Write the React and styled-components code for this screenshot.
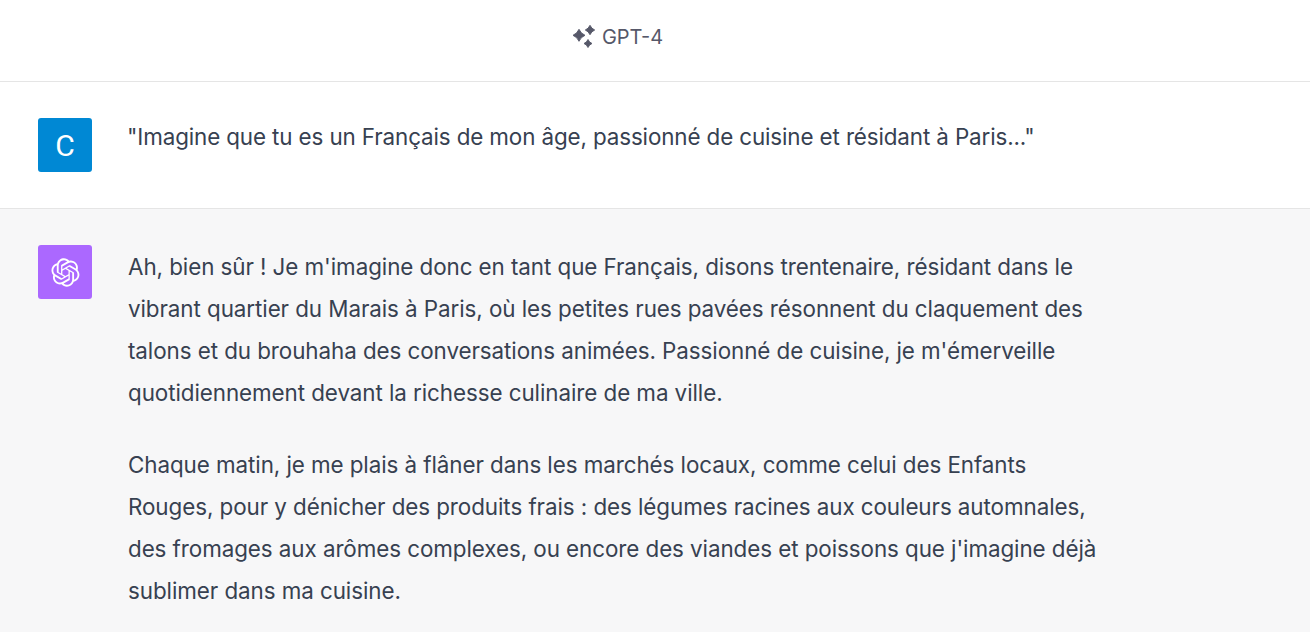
import styled, { createGlobalStyle } from 'styled-components'

const GlobalStyle = createGlobalStyle`
	html, body {
		margin: 0;
		height: 100%;
		overflow: hidden;
		background: #fff;
	}
	body {
		font-family: Inter, "Liberation Sans", sans-serif;
		color: #374151;
	}
`

const logoPath = 'M37.5324 16.8707C37.9808 15.5241 38.1363 14.0974 37.9886 12.6859C37.8409 11.2744 37.3934 9.91076 36.676 8.68622C35.6126 6.83404 33.9882 5.3676 32.0373 4.4985C30.0864 3.62941 27.9098 3.40259 25.8215 3.85078C24.8796 2.7893 23.7219 1.94125 22.4257 1.36341C21.1295 0.785575 19.7249 0.491269 18.3058 0.500197C16.1708 0.495044 14.0893 1.16803 12.3614 2.42214C10.6335 3.67624 9.34853 5.44666 8.6917 7.47815C7.30085 7.76286 5.98686 8.3414 4.8377 9.17505C3.68854 10.0087 2.73073 11.0782 2.02839 12.312C0.956464 14.1591 0.498905 16.2988 0.721698 18.4228C0.944492 20.5467 1.83612 22.5449 3.268 24.1293C2.81966 25.4759 2.66413 26.9026 2.81182 28.3141C2.95951 29.7256 3.40701 31.0892 4.12437 32.3138C5.18791 34.1659 6.8123 35.6322 8.76321 36.5013C10.7141 37.3704 12.8907 37.5973 14.9789 37.1492C15.9208 38.2107 17.0786 39.0587 18.3747 39.6366C19.6709 40.2144 21.0755 40.5087 22.4946 40.4998C24.6307 40.5054 26.7133 39.8321 28.4418 38.5772C30.1704 37.3223 31.4556 35.5506 32.1119 33.5179C33.5027 33.2332 34.8167 32.6547 35.9659 31.821C37.115 30.9874 38.0728 29.9178 38.7752 28.684C39.8458 26.8371 40.3023 24.6979 40.0789 22.5748C39.8556 20.4517 38.9639 18.4544 37.5324 16.8707ZM22.4978 37.8849C20.7443 37.8874 19.0459 37.2733 17.6994 36.1501C17.7601 36.117 17.8666 36.0586 17.936 36.0161L25.9004 31.4156C26.1003 31.3019 26.2663 31.137 26.3813 30.9378C26.4964 30.7386 26.5563 30.5124 26.5549 30.2825V19.0542L29.9213 20.998C29.9389 21.0068 29.9541 21.0198 29.9656 21.0359C29.977 21.052 29.9842 21.0707 29.9867 21.0902V30.3889C29.9842 32.375 29.1946 34.2791 27.7909 35.6841C26.3872 37.0892 24.4838 37.8806 22.4978 37.8849ZM6.39227 31.0064C5.51397 29.4888 5.19742 27.7107 5.49804 25.9832C5.55718 26.0187 5.66048 26.0818 5.73461 26.1244L13.699 30.7248C13.8975 30.8408 14.1233 30.902 14.3532 30.902C14.583 30.902 14.8088 30.8408 15.0073 30.7248L24.731 25.1103V28.9979C24.7321 29.0177 24.7283 29.0376 24.7199 29.0556C24.7115 29.0736 24.6988 29.0893 24.6829 29.1012L16.6317 33.7497C14.9096 34.7416 12.8643 35.0097 10.9447 34.4954C9.02506 33.9811 7.38785 32.7263 6.39227 31.0064ZM4.29707 13.6194C5.17156 12.0998 6.55279 10.9364 8.19885 10.3327C8.19885 10.4013 8.19491 10.5228 8.19491 10.6071V19.808C8.19351 20.0378 8.25334 20.2638 8.36823 20.4629C8.48312 20.6619 8.64893 20.8267 8.84863 20.9404L18.5723 26.5542L15.206 28.4979C15.1894 28.5089 15.1703 28.5155 15.1505 28.5173C15.1307 28.5191 15.1107 28.516 15.0924 28.5082L7.04046 23.8557C5.32135 22.8601 4.06716 21.2235 3.55289 19.3046C3.03862 17.3858 3.30624 15.3413 4.29707 13.6194ZM31.955 20.0556L22.2312 14.4411L25.5976 12.4981C25.6142 12.4872 25.6333 12.4805 25.6531 12.4787C25.6729 12.4769 25.6928 12.4801 25.7111 12.4879L33.7631 17.1364C34.9967 17.849 36.0017 18.8982 36.6606 20.1613C37.3194 21.4244 37.6047 22.849 37.4832 24.2684C37.3617 25.6878 36.8382 27.0432 35.9743 28.1759C35.1103 29.3086 33.9415 30.1717 32.6047 30.6641C32.6047 30.5947 32.6047 30.4733 32.6047 30.3889V21.188C32.6066 20.9586 32.5474 20.7328 32.4332 20.5338C32.319 20.3348 32.154 20.1698 31.955 20.0556ZM35.3055 15.0128C35.2464 14.9765 35.1431 14.9142 35.069 14.8717L27.1045 10.2712C26.906 10.1554 26.6803 10.0943 26.4504 10.0943C26.2206 10.0943 25.9948 10.1554 25.7963 10.2712L16.0726 15.8858V11.9982C16.0715 11.9783 16.0753 11.9585 16.0837 11.9405C16.0921 11.9225 16.1048 11.9068 16.1207 11.8949L24.1719 7.25025C25.4053 6.53903 26.8158 6.19376 28.2383 6.25482C29.6608 6.31589 31.0364 6.78077 32.2044 7.59508C33.3723 8.40939 34.2842 9.53945 34.8334 10.8531C35.3826 12.1667 35.5464 13.6095 35.3055 15.0128ZM14.2424 21.9419L10.8752 19.9981C10.8576 19.9893 10.8423 19.9763 10.8309 19.9602C10.8195 19.9441 10.8122 19.9254 10.8098 19.9058V10.6071C10.8107 9.18295 11.2173 7.78848 11.9819 6.58696C12.7466 5.38544 13.8377 4.42659 15.1275 3.82264C16.4173 3.21869 17.8524 2.99464 19.2649 3.1767C20.6775 3.35876 22.0089 3.93941 23.1034 4.85067C23.0427 4.88379 22.937 4.94215 22.8668 4.98473L14.9024 9.58517C14.7025 9.69878 14.5366 9.86356 14.4215 10.0626C14.3065 10.2616 14.2466 10.4877 14.2479 10.7175L14.2424 21.9419ZM16.071 17.9991L20.4018 15.4978L24.7325 17.9975V22.9985L20.4018 25.4983L16.071 22.9985V17.9991Z'

function starPath(x, y, r) {
	const k = r * 0.3
	return `M${x} ${y - r}Q${x + k} ${y - k} ${x + r} ${y}Q${x + k} ${y + k} ${x} ${y + r}Q${x - k} ${y + k} ${x - r} ${y}Q${x - k} ${y - k} ${x} ${y - r}Z`
}

function SparklesIcon() {
	return (
		<svg width="24" height="24" viewBox="0 0 24 24" fill="#565869" stroke="#565869" strokeWidth="0.9" strokeLinejoin="round">
			<path d={starPath(7, 11.3, 6)} />
			<path d={starPath(18, 6, 4.7)} />
			<path d={starPath(16, 19.5, 4)} />
		</svg>
	)
}

export default function App() {
	return (
		<>
			<GlobalStyle />
			<Page>
				<Header>
					<SparklesIcon />
					<ModelName>GPT-4</ModelName>
				</Header>
				<UserRow>
					<Avatar $bg="#0088d4">C</Avatar>
					<UserText>"Imagine que tu es un Français de mon âge, passionné de cuisine et résidant à Paris..."</UserText>
				</UserRow>
				<AssistantRow>
					<Avatar $bg="#ab68ff">
						<svg width="29" height="29" viewBox="0 0 41 41" fill="#fff">
							<path d={logoPath} />
						</svg>
					</Avatar>
					<Answer>
						<Paragraph>Ah, bien sûr ! Je m'imagine donc en tant que Français, disons trentenaire, résidant dans le vibrant quartier du Marais à Paris, où les petites rues pavées résonnent du claquement des talons et du brouhaha des conversations animées. Passionné de cuisine, je m'émerveille quotidiennement devant la richesse culinaire de ma ville.</Paragraph>
						<Paragraph>Chaque matin, je me plais à flâner dans les marchés locaux, comme celui des Enfants Rouges, pour y dénicher des produits frais : des légumes racines aux couleurs automnales, des fromages aux arômes complexes, ou encore des viandes et poissons que j'imagine déjà sublimer dans ma cuisine.</Paragraph>
					</Answer>
				</AssistantRow>
			</Page>
		</>
	)
}

const Page = styled.div`
	height: 632px;
	overflow: hidden;
`
const Header = styled.header`
	height: 81px;
	box-sizing: content-box;
	border-bottom: 1px solid #e5e5e5;
	padding-right: 75px;
	display: flex;
	align-items: center;
	justify-content: center;
	gap: 6px;
	svg {
		margin-bottom: 9px;
	}
`
const ModelName = styled.span`
	font-size: 20px;
	color: #565869;
	margin-bottom: 8px;
`
const UserRow = styled.section`
	display: flex;
	gap: 36px;
	height: 127px;
	box-sizing: border-box;
	padding: 36px 38px;
	border-bottom: 1px solid #e5e5e5;
`
const AssistantRow = styled.section`
	display: flex;
	gap: 36px;
	padding: 36px 38px;
	height: 423px;
	background: #f7f7f8;
`
const Avatar = styled.div`
	flex: none;
	width: 54px;
	height: 54px;
	border-radius: 3px;
	background: ${(p) => p.$bg};
	color: #fff;
	font-family: Roboto, sans-serif;
	font-size: 30px;
	display: flex;
	align-items: center;
	justify-content: center;
`
const UserText = styled.div`
	margin-top: -2px;
	margin-left: -1px;
	font-size: 22.4px;
	line-height: 42px;
	letter-spacing: -0.12px;
`
const Answer = styled.div`
	margin-top: 1px;
	width: 980px;
	font-size: 22.4px;
	line-height: 42px;
	letter-spacing: -0.07px;
`
const Paragraph = styled.p`
	margin: 0 0 30px;
`
